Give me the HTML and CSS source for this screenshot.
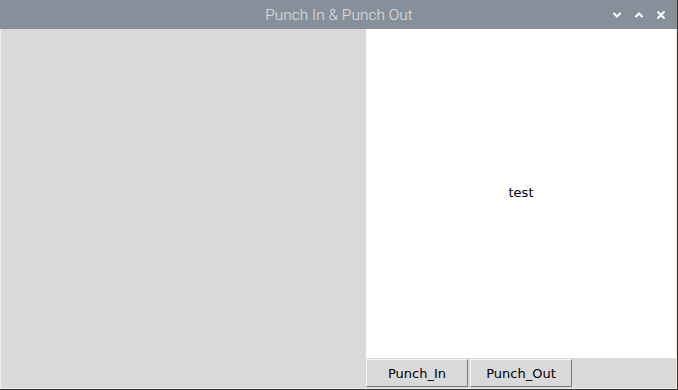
FILE: index.html
```html
<!DOCTYPE html>
<html lang="en">
<head>
    <meta charset="UTF-8">
    <title>Punch In & Punch Out</title>
    <link rel="stylesheet" href="styles.css">
</head>
<body>
    <div class="window">
        <!-- title bar -->
        <div class="titlebar">
            <span class="title">Punch In &amp; Punch Out</span>
            <div class="controls">
                <svg width="10" height="8" viewBox="0 0 10 8"><path d="M1.5 2 L5 5.5 L8.5 2" fill="none" stroke="#fff" stroke-width="2"/></svg>
                <svg width="10" height="8" viewBox="0 0 10 8"><path d="M1.5 6 L5 2.5 L8.5 6" fill="none" stroke="#fff" stroke-width="2"/></svg>
                <svg width="10" height="10" viewBox="0 0 10 10"><path d="M1.5 1.5 L8.5 8.5 M8.5 1.5 L1.5 8.5" fill="none" stroke="#fff" stroke-width="2"/></svg>
            </div>
        </div>

        <div class="content">
            <div class="left-panel"></div>
            <div class="right-panel">
                <div class="display">test</div>
                <div class="buttons">
                    <button class="tk-btn">Punch_In</button>
                    <button class="tk-btn">Punch_Out</button>
                </div>
            </div>
        </div>
    </div>
</body>
</html>
```
FILE: styles.css
```css
body {
    margin: 0;
    width: 678px;
    height: 390px;
    overflow: hidden;
    background: #3a3530;
    font-family: "DejaVu Sans", sans-serif;
}

.window {
    display: flex;
    flex-direction: column;
    width: 677px;
    height: 389px;
    background: #d9d9d9;
}

.titlebar {
    position: relative;
    height: 29px;
    background: #87909a;
    display: flex;
    align-items: center;
    justify-content: center;
    flex-shrink: 0;
}

.title {
    color: #dfe2e5;
    font-family: Roboto, "Noto Sans", sans-serif;
    font-weight: 300;
    font-size: 15.5px;
    padding-left: 1px;
}

.controls {
    position: absolute;
    right: 11px;
    top: 10px;
    display: flex;
    align-items: center;
    gap: 12px;
}

.controls svg {
    display: block;
}

.content {
    flex: 1;
    display: flex;
    border-left: 1px solid #ececec;
    border-right: 1px solid #ececec;
    border-bottom: 1px solid #ececec;
}

.left-panel {
    width: 365px;
    background: #d9d9d9;
}

.right-panel {
    flex: 1;
    display: flex;
    flex-direction: column;
}

.display {
    flex: 1;
    background: #ffffff;
    display: flex;
    align-items: center;
    justify-content: center;
    font-size: 13px;
    color: #000;
    padding-bottom: 2px;
}

.buttons {
    display: flex;
    gap: 2px;
    padding: 1px 0 1px 0;
    height: 28px;
    box-sizing: content-box;
}

.tk-btn {
    width: 102px;
    height: 28px;
    background: #d9d9d9;
    border: 1px solid;
    border-color: #f6f6f6 #7a7a7a #7a7a7a #f6f6f6;
    font-family: "DejaVu Sans", sans-serif;
    font-size: 13px;
    color: #000;
    padding: 0;
    margin: 0;
}
```
